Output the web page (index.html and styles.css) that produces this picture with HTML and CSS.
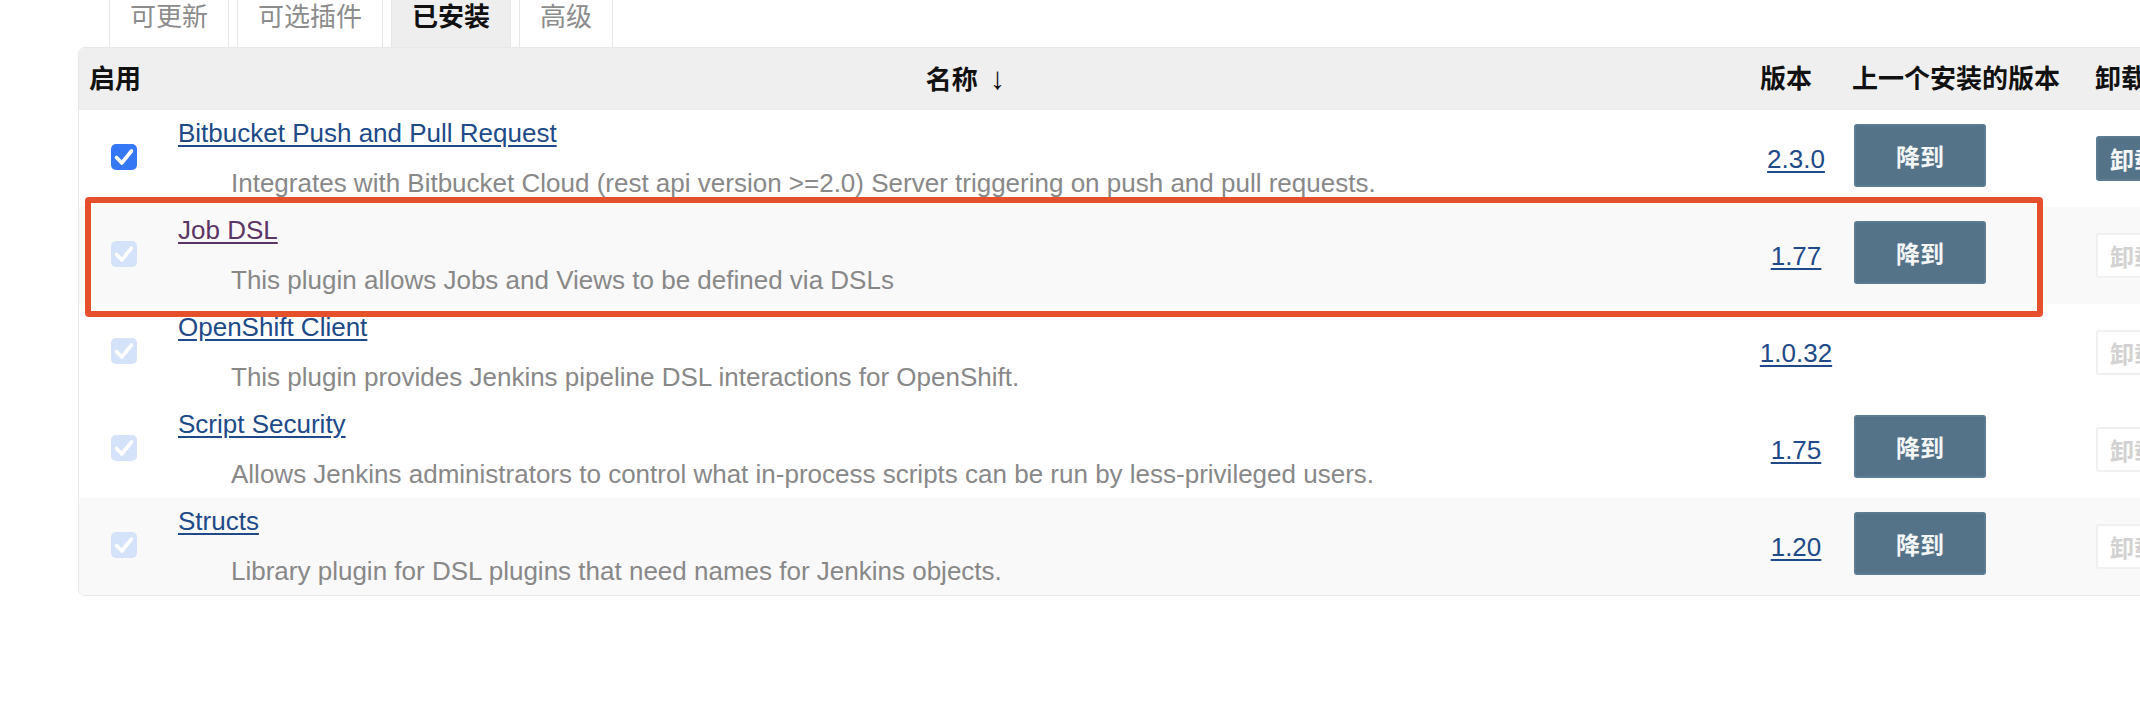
FILE: index.html
```html
<!DOCTYPE html>
<html lang="zh-CN">
<head>
<meta charset="utf-8">
<title>插件管理</title>
<link rel="stylesheet" href="styles.css">
</head>
<body>
<div class="page">
  <div class="tabs">
    <div class="tab">可更新</div>
    <div class="tab">可选插件</div>
    <div class="tab active">已安装</div>
    <div class="tab">高级</div>
  </div>
  <div class="table-wrap">
    <table class="plugins">
      <colgroup>
        <col class="c-enable">
        <col class="c-name">
        <col class="c-ver">
        <col class="c-prev">
        <col class="c-uninst">
      </colgroup>
      <thead>
        <tr>
          <th class="th-left">启用</th>
          <th class="th-name">名称 <span class="arrow">↓</span></th>
          <th class="th-left">版本</th>
          <th class="th-left">上一个安装的版本</th>
          <th class="th-left">卸载</th>
        </tr>
      </thead>
      <tbody>
        <tr>
          <td class="td-check"><span class="cb on"><svg viewBox="0 0 26 26"><path d="M5.5 13.5 L10.8 19 L20.5 7"/></svg></span></td>
          <td class="td-name"><a class="plink" href="#">Bitbucket Push and Pull Request</a><div class="desc">Integrates with Bitbucket Cloud (rest api version &gt;=2.0) Server triggering on push and pull requests.</div></td>
          <td class="td-ver"><a class="vlink" href="#">2.3.0</a></td>
          <td class="td-prev"><button class="btn-down">降到</button></td>
          <td class="td-un"><button class="btn-un on">卸载</button></td>
        </tr>
        <tr class="alt">
          <td class="td-check"><span class="cb off"><svg viewBox="0 0 26 26"><path d="M5.5 13.5 L10.8 19 L20.5 7"/></svg></span></td>
          <td class="td-name"><a class="plink visited" href="#">Job DSL</a><div class="desc">This plugin allows Jobs and Views to be defined via DSLs</div></td>
          <td class="td-ver"><a class="vlink" href="#">1.77</a></td>
          <td class="td-prev"><button class="btn-down">降到</button></td>
          <td class="td-un"><button class="btn-un">卸载</button></td>
        </tr>
        <tr>
          <td class="td-check"><span class="cb off"><svg viewBox="0 0 26 26"><path d="M5.5 13.5 L10.8 19 L20.5 7"/></svg></span></td>
          <td class="td-name"><a class="plink" href="#">OpenShift Client</a><div class="desc">This plugin provides Jenkins pipeline DSL interactions for OpenShift.</div></td>
          <td class="td-ver"><a class="vlink" href="#">1.0.32</a></td>
          <td class="td-prev"></td>
          <td class="td-un"><button class="btn-un">卸载</button></td>
        </tr>
        <tr>
          <td class="td-check"><span class="cb off"><svg viewBox="0 0 26 26"><path d="M5.5 13.5 L10.8 19 L20.5 7"/></svg></span></td>
          <td class="td-name"><a class="plink" href="#">Script Security</a><div class="desc">Allows Jenkins administrators to control what in-process scripts can be run by less-privileged users.</div></td>
          <td class="td-ver"><a class="vlink" href="#">1.75</a></td>
          <td class="td-prev"><button class="btn-down">降到</button></td>
          <td class="td-un"><button class="btn-un">卸载</button></td>
        </tr>
        <tr class="alt">
          <td class="td-check"><span class="cb off"><svg viewBox="0 0 26 26"><path d="M5.5 13.5 L10.8 19 L20.5 7"/></svg></span></td>
          <td class="td-name"><a class="plink" href="#">Structs</a><div class="desc">Library plugin for DSL plugins that need names for Jenkins objects.</div></td>
          <td class="td-ver"><a class="vlink" href="#">1.20</a></td>
          <td class="td-prev"><button class="btn-down">降到</button></td>
          <td class="td-un"><button class="btn-un">卸载</button></td>
        </tr>
      </tbody>
    </table>
  </div>
  <div class="highlight"></div>
</div>
</body>
</html>
```

FILE: styles.css
```css
html, body {
  margin: 0;
  padding: 0;
  background: #ffffff;
  overflow: hidden;
}

body {
  font-family: "Liberation Sans", "Noto Sans CJK SC", sans-serif;
  font-size: 26px;
  color: #333333;
}

.page {
  position: relative;
  display: flow-root;
  padding-left: 78px;
  width: 2300px;
}

/* Tabs */
.tabs {
  display: flex;
  gap: 8px;
  margin-top: -14px;
  padding-left: 31px;
}

.tab {
  padding: 12px 20px;
  line-height: 36px;
  height: 36px;
  border: 1px solid #e6e6e6;
  border-bottom: none;
  color: #8c8c8c;
  font-size: 26px;
  background: #ffffff;
}

.tab.active {
  background: #eeeeee;
  color: #111111;
  font-weight: bold;
}

/* Table */
.table-wrap {
  width: 2138px;
  border: 1px solid #e8e8e8;
  border-radius: 7px;
  overflow: hidden;
}

.plugins {
  width: 2138px;
  border-collapse: collapse;
  table-layout: fixed;
}

.c-enable { width: 90px; }
.c-name { width: 1581px; }
.c-ver { width: 92px; }
.c-prev { width: 243px; }
.c-uninst { width: 132px; }

.plugins th {
  height: 62px;
  padding: 0 10px;
  background: #efefef;
  font-weight: bold;
  color: #111111;
  text-align: left;
  vertical-align: middle;
  white-space: nowrap;
  line-height: 36px;
}

.plugins th.th-name {
  text-align: center;
  padding-left: 12px;
  padding-right: 0;
}

.arrow {
  font-weight: normal;
  font-family: "Liberation Sans", "DejaVu Sans", sans-serif;
  font-size: 31px;
  margin-left: 5px;
}

.plugins td {
  padding: 0;
  height: 97px;
  box-sizing: border-box;
}

.plugins tr.alt td {
  background: #f9f9f9;
}

.td-check {
  vertical-align: top;
  padding-top: 34px !important;
}

.cb {
  display: block;
  width: 26px;
  height: 26px;
  margin: 0 auto;
  border-radius: 5px;
  box-sizing: border-box;
}

.cb svg {
  display: block;
  width: 26px;
  height: 26px;
}

.cb path {
  fill: none;
  stroke: #ffffff;
  stroke-width: 3.6;
  stroke-linecap: round;
  stroke-linejoin: round;
}

.cb.on {
  background: #3478f6;
}

.cb.off {
  background: #d4e2fa;
}

.td-name {
  vertical-align: top;
  padding: 5px 10px 6px 9px !important;
  line-height: 36px;
}

.plink {
  color: #204a87;
  text-decoration: underline;
  text-underline-offset: 3px;
}

.plink.visited {
  color: #5c3566;
}

.desc {
  margin-top: 14px;
  padding-left: 53px;
  color: #888888;
  white-space: nowrap;
}

.td-ver {
  text-align: center;
  vertical-align: middle;
  line-height: 36px;
}

.vlink {
  color: #204a87;
  text-decoration: underline;
  text-underline-offset: 3px;
}

.td-prev {
  vertical-align: top;
  padding: 14px 0 0 12px !important;
}

.btn-down {
  display: block;
  width: 132px;
  height: 63px;
  margin: 0;
  padding: 0;
  background: #557388;
  border: 2px solid #5b7c93;
  border-radius: 3px;
  color: #f4f6f8;
  font-family: "Liberation Sans", "Noto Sans CJK SC", sans-serif;
  font-size: 24px;
  font-weight: bold;
}

.td-un {
  vertical-align: middle;
  padding-left: 11px !important;
  white-space: nowrap;
}

.btn-un {
  display: inline-block;
  height: 45px;
  margin: 0;
  padding: 0 12px;
  background: #ffffff;
  border: 2px solid #f0f0f0;
  border-radius: 3px;
  color: #d2d2d2;
  font-family: "Liberation Sans", "Noto Sans CJK SC", sans-serif;
  font-size: 24px;
  font-weight: bold;
}

.btn-un.on {
  background: #557388;
  border-color: #5b7c93;
  color: #f4f6f8;
}

/* Annotation overlay */
.highlight {
  position: absolute;
  left: 85px;
  top: 197px;
  width: 1958px;
  height: 120px;
  box-sizing: border-box;
  border: 6px solid #e5502b;
  border-radius: 4px;
  pointer-events: none;
}
```
